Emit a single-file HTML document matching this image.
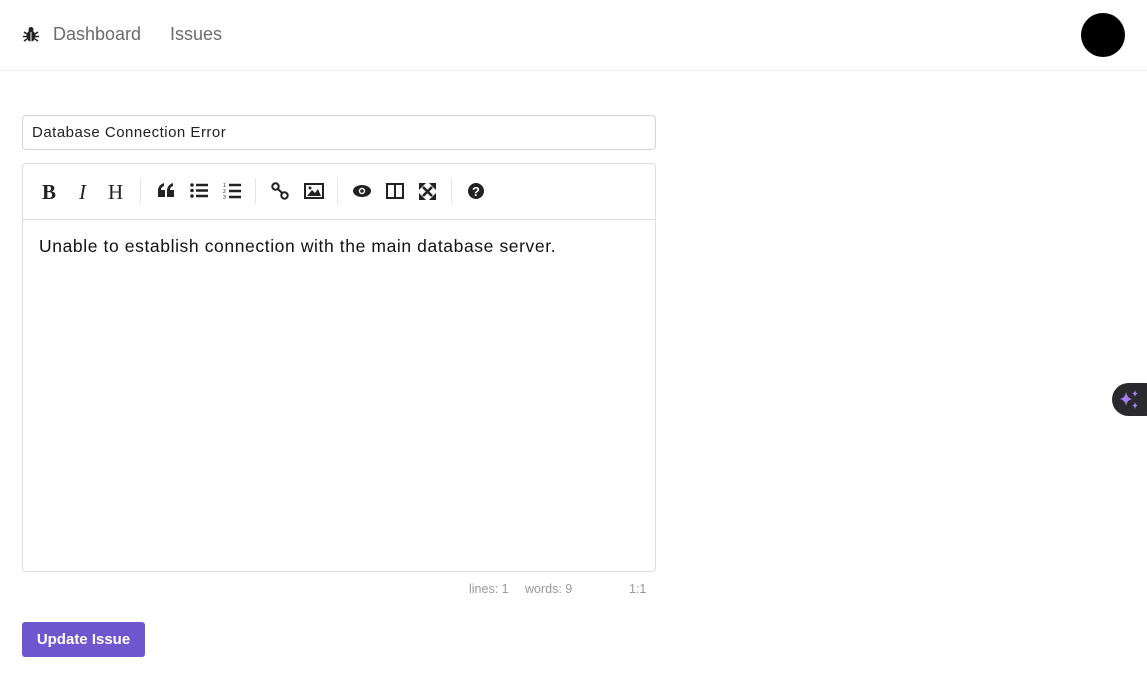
<!DOCTYPE html>
<html><head><style>
body{margin:0;width:1147px;height:676px;background:#fff;font-family:"Liberation Sans",sans-serif;position:relative;overflow:hidden}
.nav{position:absolute;left:0;top:0;width:1147px;height:70px;border-bottom:1px solid #f0f0f0}
.nav span{position:absolute;top:24px;font-size:18px;color:#6b6b6b}
.avatar{position:absolute;left:1081px;top:13px;width:44px;height:44px;border-radius:50%;background:#000}
.title{position:absolute;left:22px;top:115px;height:35px;border:1px solid #d4d4d4;border-radius:4px;font-size:15px;line-height:34px;padding-left:9px;box-sizing:border-box;width:634px;color:#222;letter-spacing:0.5px}
.editor{position:absolute;left:22px;top:163px;width:634px;height:409px;border:1px solid #ddd;border-radius:4px;box-sizing:border-box}
.tb{height:55px;border-bottom:1px solid #ddd;position:relative}
.tb i{position:absolute;top:16px;font-style:normal;font-size:21px;color:#222}
.tb svg{position:absolute}
.sep{position:absolute;top:14px;width:1px;height:26px;background:#e6e6e6}
.txt{position:absolute;left:16px;top:72px;font-size:17.5px;color:#111;letter-spacing:0.6px}
.status{position:absolute;top:582px;font-size:12.5px;color:#999}
.btn{position:absolute;left:22px;top:622px;width:123px;height:35px;background:#6e56cf;border-radius:3px;color:#fff;font-weight:bold;font-size:15px;line-height:35px;text-align:center}
.ai{position:absolute;left:1112px;top:383px;width:50px;height:33px;border-radius:17px;background:#2a2a2e}
</style></head><body>
<div class="nav">
<svg style="position:absolute;left:23px;top:26px" width="16" height="17" viewBox="0 0 16 17"><circle cx="8" cy="3.5" r="2.5" fill="#222"/><ellipse cx="8" cy="10" rx="4.5" ry="5.5" fill="#222"/><path d="M1 6L4 8M15 6L12 8M0 10.5H4M16 10.5H12M1 15L4 13M15 15L12 13" stroke="#222" stroke-width="1.6"/><line x1="8" y1="6" x2="8" y2="16" stroke="#fff" stroke-width="1"/></svg>
<span style="left:53px">Dashboard</span>
<span style="left:170px">Issues</span>
<div class="avatar"></div>
</div>
<div class="title">Database Connection Error</div>
<div class="editor">
<div class="tb">
<i style="left:19px;font-family:'Liberation Serif';font-weight:bold">B</i>
<i style="left:56px;font-family:'Liberation Serif';font-style:italic">I</i>
<i style="left:85px;font-family:'Liberation Serif'">H</i>
<div class="sep" style="left:117px"></div>
<svg style="left:134px;top:19px" width="18" height="14" viewBox="0 0 18 14"><path d="M1 14V8Q1 2 7 0V3Q4 4 4 7H8V14Z M10 14V8Q10 2 16 0V3Q13 4 13 7H17V14Z" fill="#222"/></svg>
<svg style="left:167px;top:19px" width="18" height="15"><circle cx="2" cy="2" r="1.8" fill="#222"/><circle cx="2" cy="7.5" r="1.8" fill="#222"/><circle cx="2" cy="13" r="1.8" fill="#222"/><path d="M6 2H18M6 7.5H18M6 13H18" stroke="#222" stroke-width="2.4"/></svg>
<svg style="left:200px;top:18px" width="18" height="17"><text x="0" y="5" font-size="5" fill="#222">1</text><text x="0" y="11" font-size="5" fill="#222">2</text><text x="0" y="17" font-size="5" fill="#222">3</text><path d="M6 3H18M6 9H18M6 15H18" stroke="#222" stroke-width="2.4"/></svg>
<div class="sep" style="left:232px"></div>
<svg style="left:248px;top:18px" width="18" height="18" viewBox="0 0 18 18"><circle cx="4.5" cy="4.5" r="3.2" fill="none" stroke="#222" stroke-width="2"/><circle cx="13.5" cy="13.5" r="3.2" fill="none" stroke="#222" stroke-width="2"/><path d="M7 7L11 11" stroke="#222" stroke-width="2"/></svg>
<svg style="left:281px;top:19px" width="20" height="16"><rect x="1" y="1" width="18" height="14" fill="none" stroke="#222" stroke-width="2"/><path d="M3 13 L8 7 L11 10 L14 6 L17 13Z" fill="#222"/><circle cx="6" cy="5" r="1.5" fill="#222"/></svg>
<div class="sep" style="left:314px"></div>
<svg style="left:329px;top:20px" width="20" height="14"><ellipse cx="10" cy="7" rx="9" ry="6" fill="#222"/><circle cx="10" cy="7" r="3.2" fill="#fff"/><circle cx="10" cy="7" r="1.8" fill="#222"/></svg>
<svg style="left:363px;top:19px" width="18" height="16"><rect x="1" y="1" width="16" height="14" fill="none" stroke="#222" stroke-width="2"/><line x1="9" y1="1" x2="9" y2="15" stroke="#222" stroke-width="2"/></svg>
<svg style="left:396px;top:19px" width="17" height="17" viewBox="0 0 17 17"><path d="M4 4L13 13M13 4L4 13" stroke="#222" stroke-width="2.6"/><path d="M0 0H7L0 7Z M17 0V7L10 0Z M0 17V10L7 17Z M17 17H10L17 10Z" fill="#222"/></svg>
<div class="sep" style="left:428px"></div>
<svg style="left:444px;top:18px" width="18" height="18"><circle cx="9" cy="9" r="8" fill="#222"/><text x="9" y="14" font-size="13" font-weight="bold" fill="#fff" text-anchor="middle" font-family="Liberation Sans">?</text></svg>
</div>
<div class="txt">Unable to establish connection with the main database server.</div>
</div>
<div class="status" style="left:469px">lines: 1</div>
<div class="status" style="left:525px">words: 9</div>
<div class="status" style="left:629px">1:1</div>
<div class="btn">Update Issue</div>
<div class="ai"><svg style="position:absolute;left:6px;top:6px" width="22" height="22" viewBox="0 0 22 22"><path d="M8 3Q9 9 14 10Q9 11 8 17Q7 11 2 10Q7 9 8 3Z" fill="#a67cf7"/><path d="M17 1Q17.5 4 20 4.5Q17.5 5 17 8Q16.5 5 14 4.5Q16.5 4 17 1Z" fill="#a67cf7"/><path d="M17 13Q17.5 16 20 16.5Q17.5 17 17 20Q16.5 17 14 16.5Q16.5 16 17 13Z" fill="#a67cf7"/></svg></div>
</body></html>
